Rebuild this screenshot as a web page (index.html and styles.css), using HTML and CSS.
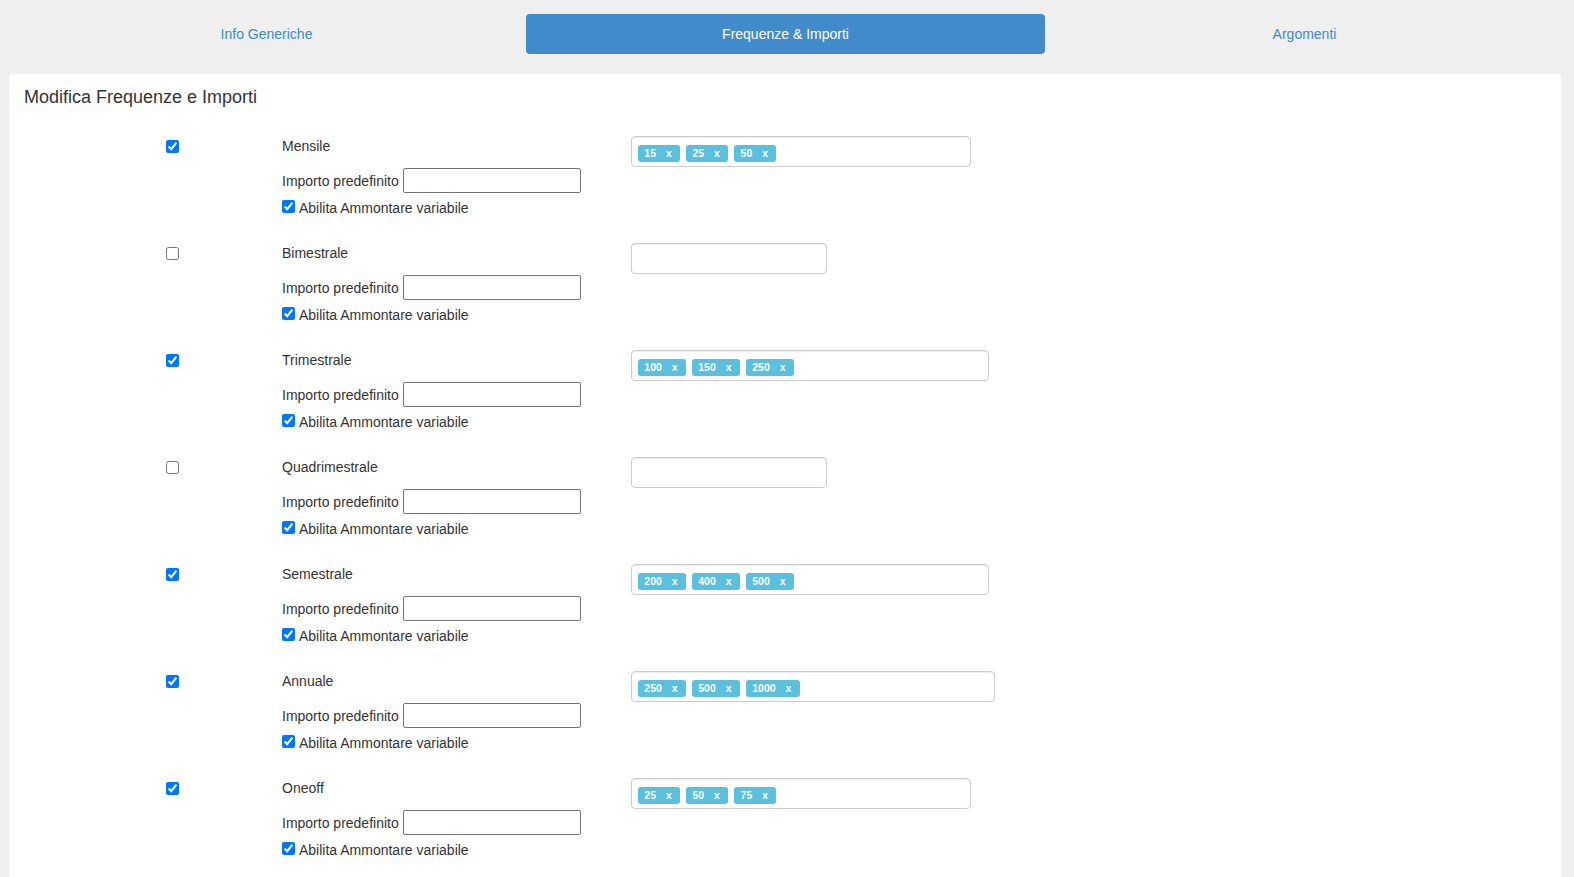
FILE: index.html
```html
<!DOCTYPE html>
<html lang="it">
<head>
<meta charset="utf-8">
<title>Frequenze &amp; Importi</title>
<link rel="stylesheet" href="styles.css">
</head>
<body>
<nav class="tabs">
  <a class="tab" href="#">Info Generiche</a>
  <a class="tab active" href="#">Frequenze &amp; Importi</a>
  <a class="tab" href="#">Argomenti</a>
</nav>
<section class="panel">
  <h4 class="title">Modifica Frequenze e Importi</h4>
  <div class="freq-list">

    <div class="freq-row">
      <div class="col-check"><input type="checkbox" checked></div>
      <div class="col-label">
        <div class="freq-name">Mensile</div>
        <div class="amount"><span>Importo predefinito</span><input type="text"></div>
        <label class="variable"><input type="checkbox" checked><span>Abilita Ammontare variabile</span></label>
      </div>
      <div class="col-tags">
        <div class="tags">
          <span class="tag">15<span class="rm">x</span></span>
          <span class="tag">25<span class="rm">x</span></span>
          <span class="tag">50<span class="rm">x</span></span>
          <input class="tag-input" type="text">
        </div>
      </div>
    </div>

    <div class="freq-row">
      <div class="col-check"><input type="checkbox"></div>
      <div class="col-label">
        <div class="freq-name">Bimestrale</div>
        <div class="amount"><span>Importo predefinito</span><input type="text"></div>
        <label class="variable"><input type="checkbox" checked><span>Abilita Ammontare variabile</span></label>
      </div>
      <div class="col-tags">
        <div class="tags">
          <input class="tag-input" type="text">
        </div>
      </div>
    </div>

    <div class="freq-row">
      <div class="col-check"><input type="checkbox" checked></div>
      <div class="col-label">
        <div class="freq-name">Trimestrale</div>
        <div class="amount"><span>Importo predefinito</span><input type="text"></div>
        <label class="variable"><input type="checkbox" checked><span>Abilita Ammontare variabile</span></label>
      </div>
      <div class="col-tags">
        <div class="tags">
          <span class="tag">100<span class="rm">x</span></span>
          <span class="tag">150<span class="rm">x</span></span>
          <span class="tag">250<span class="rm">x</span></span>
          <input class="tag-input" type="text">
        </div>
      </div>
    </div>

    <div class="freq-row">
      <div class="col-check"><input type="checkbox"></div>
      <div class="col-label">
        <div class="freq-name">Quadrimestrale</div>
        <div class="amount"><span>Importo predefinito</span><input type="text"></div>
        <label class="variable"><input type="checkbox" checked><span>Abilita Ammontare variabile</span></label>
      </div>
      <div class="col-tags">
        <div class="tags">
          <input class="tag-input" type="text">
        </div>
      </div>
    </div>

    <div class="freq-row">
      <div class="col-check"><input type="checkbox" checked></div>
      <div class="col-label">
        <div class="freq-name">Semestrale</div>
        <div class="amount"><span>Importo predefinito</span><input type="text"></div>
        <label class="variable"><input type="checkbox" checked><span>Abilita Ammontare variabile</span></label>
      </div>
      <div class="col-tags">
        <div class="tags">
          <span class="tag">200<span class="rm">x</span></span>
          <span class="tag">400<span class="rm">x</span></span>
          <span class="tag">500<span class="rm">x</span></span>
          <input class="tag-input" type="text">
        </div>
      </div>
    </div>

    <div class="freq-row">
      <div class="col-check"><input type="checkbox" checked></div>
      <div class="col-label">
        <div class="freq-name">Annuale</div>
        <div class="amount"><span>Importo predefinito</span><input type="text"></div>
        <label class="variable"><input type="checkbox" checked><span>Abilita Ammontare variabile</span></label>
      </div>
      <div class="col-tags">
        <div class="tags">
          <span class="tag">250<span class="rm">x</span></span>
          <span class="tag">500<span class="rm">x</span></span>
          <span class="tag">1000<span class="rm">x</span></span>
          <input class="tag-input" type="text">
        </div>
      </div>
    </div>

    <div class="freq-row">
      <div class="col-check"><input type="checkbox" checked></div>
      <div class="col-label">
        <div class="freq-name">Oneoff</div>
        <div class="amount"><span>Importo predefinito</span><input type="text"></div>
        <label class="variable"><input type="checkbox" checked><span>Abilita Ammontare variabile</span></label>
      </div>
      <div class="col-tags">
        <div class="tags">
          <span class="tag">25<span class="rm">x</span></span>
          <span class="tag">50<span class="rm">x</span></span>
          <span class="tag">75<span class="rm">x</span></span>
          <input class="tag-input" type="text">
        </div>
      </div>
    </div>

  </div>
</section>
</body>
</html>
```
FILE: styles.css
```css
html {
  scrollbar-width: none;
}

body {
  margin: 0;
  background: #efefef;
  font-family: "Liberation Sans", Arial, sans-serif;
  font-size: 14px;
  color: #333;
}

.tabs {
  display: grid;
  grid-template-columns: repeat(3, 1fr);
  padding-top: 14px;
  margin: 0 10px 20px 7px;
}

.tab {
  height: 40px;
  display: flex;
  align-items: center;
  justify-content: center;
  color: #428bca;
  text-decoration: none;
  border-radius: 4px;
  font-size: 14px;
}

.tab.active {
  background: #428bca;
  color: #fff;
}

.panel {
  background: #fff;
  margin: 0 13px 0 9px;
  border-radius: 4px;
  padding: 13px 15px 20px;
}

.title {
  margin: 0;
  font-size: 18px;
  line-height: 20px;
  font-weight: normal;
  color: #333;
}

.freq-list {
  margin-top: 29px;
}

.freq-row {
  display: flex;
  height: 107px;
  align-items: flex-start;
}

.col-check {
  width: 258px;
  flex-shrink: 0;
  box-sizing: border-box;
  padding-left: 142px;
}

.col-check input {
  display: block;
  margin: 4px 0 0;
  width: 13px;
  height: 13px;
}

.col-label {
  width: 349px;
  flex-shrink: 0;
}

.freq-name {
  line-height: 20px;
}

.amount {
  display: flex;
  align-items: center;
  height: 25px;
  margin-top: 12px;
  line-height: 20px;
}

.amount input {
  margin: 0 0 0 4px;
  width: 178px;
  height: 25px;
  box-sizing: border-box;
  border: 1px solid #767676;
  border-radius: 2px;
  padding: 1px 2px;
  font: inherit;
  background: #fff;
}

.variable {
  display: flex;
  align-items: flex-start;
  line-height: 20px;
  margin-top: 5px;
}

.variable input {
  margin: 2px 4px 0 0;
  width: 13px;
  height: 13px;
}

.col-tags {
  flex: 1;
}

.tags {
  display: inline-flex;
  align-items: flex-start;
  gap: 6px;
  height: 31px;
  box-sizing: border-box;
  border: 1px solid #ccc;
  border-radius: 4px;
  box-shadow: inset 0 1px 1px rgba(0, 0, 0, 0.075);
  padding: 8px 6px 4px;
  background: #fff;
}

.tag {
  display: inline-block;
  height: 17px;
  line-height: 17px;
  padding: 0 6.3px;
  background: #5bc0de;
  color: #fff;
  font-size: 10.5px;
  font-weight: bold;
  border-radius: 3px;
  white-space: nowrap;
}

.tag .rm {
  margin-left: 8px;
  padding: 0 2px;
}

.tag-input {
  width: 182px;
  height: 17px;
  border: none;
  padding: 0;
  margin: 0;
  background: transparent;
  outline: none;
  box-shadow: none;
}
```
